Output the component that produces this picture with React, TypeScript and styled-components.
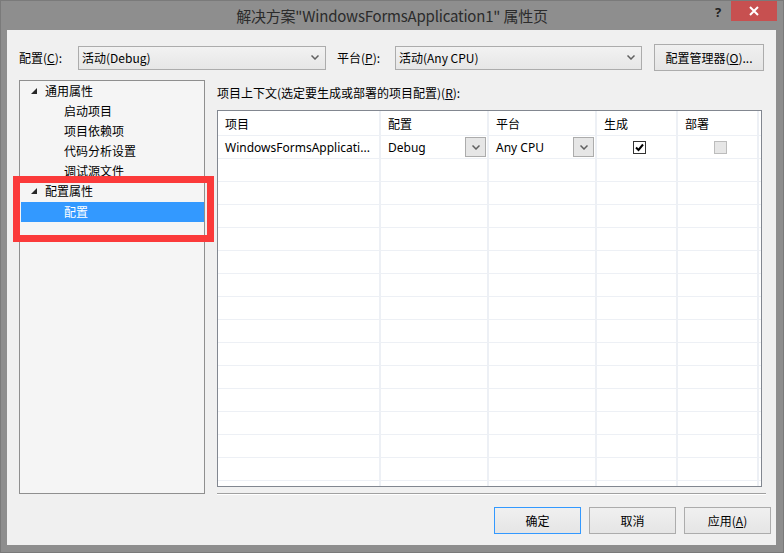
import styled, { createGlobalStyle } from 'styled-components'

const GlobalStyle = createGlobalStyle`
  html, body {
    margin: 0;
    padding: 0;
  }
  body {
    width: 784px;
    height: 553px;
    overflow: hidden;
    font-family: "Noto Sans", "Noto Sans CJK SC", sans-serif;
    font-size: 12px;
    color: #000;
  }
  * {
    box-sizing: border-box;
  }
`

const treeItems = [
  { id: 1, label: '通用属性', level: 0, expanded: true },
  { id: 2, label: '启动项目', level: 1 },
  { id: 3, label: '项目依赖项', level: 1 },
  { id: 4, label: '代码分析设置', level: 1 },
  { id: 5, label: '调试源文件', level: 1 },
  { id: 6, label: '配置属性', level: 0, expanded: true },
  { id: 7, label: '配置', level: 1, selected: true },
]

const columns = [
  { key: 'project', title: '项目', width: 163 },
  { key: 'config', title: '配置', width: 108 },
  { key: 'platform', title: '平台', width: 108 },
  { key: 'build', title: '生成', width: 81 },
  { key: 'deploy', title: '部署', width: 81 },
]

const emptyRows = Array.from({ length: 15 }, (_, i) => i)

function Chevron() {
  return (
    <svg width="8" height="5" viewBox="0 0 8 5">
      <polyline points="0.5,0.5 4,4 7.5,0.5" fill="none" stroke="#606060" strokeWidth="1.5" />
    </svg>
  )
}

function Expander() {
  return (
    <svg width="6" height="6" viewBox="0 0 6 6">
      <polygon points="6,0 6,6 0,6" fill="#262626" />
    </svg>
  )
}

export default function App() {
  const gridCols = columns.map((c) => `${c.width}px`).join(' ') + ' 1fr'

  return (
    <>
      <GlobalStyle />
      <Window>
        <TitleBar>
          <span />
          <Title>解决方案"WindowsFormsApplication1" 属性页</Title>
          <Controls>
            <HelpButton>?</HelpButton>
            <CloseButton>
              <svg width="10" height="10" viewBox="0 0 10 10">
                <path d="M1 1 L9 9 M9 1 L1 9" stroke="#fff" strokeWidth="2" />
              </svg>
            </CloseButton>
          </Controls>
        </TitleBar>

        <Client>
          <TopRow>
            <FieldLabel $width={59}>
              配置(<u>C</u>):
            </FieldLabel>
            <Combo $width={248}>
              <span>活动(Debug)</span>
              <Chevron />
            </Combo>
            <FieldLabel $width={58} $gap={11}>
              平台(<u>P</u>):
            </FieldLabel>
            <Combo $width={247}>
              <span>活动(Any CPU)</span>
              <Chevron />
            </Combo>
            <ManagerButton>
              配置管理器(<u>O</u>)...
            </ManagerButton>
          </TopRow>

          <Middle>
            <Tree>
              {treeItems.map((item) => (
                <TreeRow key={item.id} $level={item.level} $selected={!!item.selected}>
                  {item.expanded && (
                    <ExpanderBox>
                      <Expander />
                    </ExpanderBox>
                  )}
                  {item.label}
                </TreeRow>
              ))}
              <Highlight />
            </Tree>

            <RightPanel>
              <ContextLabel>
                项目上下文(选定要生成或部署的项目配置)(<u>R</u>):
              </ContextLabel>
              <Grid>
                <GridRow $cols={gridCols} $header>
                  {columns.map((c) => (
                    <HeaderCell key={c.key}>{c.title}</HeaderCell>
                  ))}
                  <FillCell />
                </GridRow>
                <GridRow $cols={gridCols}>
                  <Cell>
                    <span>WindowsFormsApplicati...</span>
                  </Cell>
                  <Cell>
                    <span>Debug</span>
                    <CellDrop>
                      <Chevron />
                    </CellDrop>
                  </Cell>
                  <Cell>
                    <span>Any CPU</span>
                    <CellDrop>
                      <Chevron />
                    </CellDrop>
                  </Cell>
                  <Cell $center>
                    <CheckBox>
                      <svg width="11" height="11" viewBox="0 0 11 11">
                        <path d="M2 5.5 L4.5 8 L9 2.5" fill="none" stroke="#000" strokeWidth="2" />
                      </svg>
                    </CheckBox>
                  </Cell>
                  <Cell $center>
                    <CheckBox $disabled />
                  </Cell>
                  <FillCell />
                </GridRow>
                {emptyRows.map((r) => (
                  <GridRow key={r} $cols={gridCols}>
                    {columns.map((c) => (
                      <Cell key={c.key} />
                    ))}
                    <FillCell />
                  </GridRow>
                ))}
              </Grid>
              <Separator />
            </RightPanel>
          </Middle>

          <ButtonRow>
            <DialogButton $default>确定</DialogButton>
            <DialogButton>取消</DialogButton>
            <DialogButton>
              应用(<u>A</u>)
            </DialogButton>
          </ButtonRow>
        </Client>
      </Window>
    </>
  )
}

const Window = styled.div`
  width: 784px;
  height: 553px;
  background: #8e8e8e;
  border: 1px solid #7a7a7a;
  display: flex;
  flex-direction: column;
`

const TitleBar = styled.div`
  height: 29px;
  display: grid;
  grid-template-columns: 1fr auto 1fr;
  align-items: start;
`

const Title = styled.div`
  font-family: "Noto Sans CJK SC", sans-serif;
  font-size: 15px;
  color: #2b2b2b;
  line-height: 30px;
  letter-spacing: -0.2px;
`

const Controls = styled.div`
  display: flex;
  justify-content: flex-end;
  align-items: flex-start;
  margin-right: 6px;
`

const HelpButton = styled.div`
  font-family: "Noto Sans", sans-serif;
  font-weight: bold;
  font-size: 13px;
  color: #222;
  width: 26px;
  text-align: center;
  line-height: 22px;
`

const CloseButton = styled.div`
  width: 46px;
  height: 20px;
  background: #c75050;
  display: flex;
  align-items: center;
  justify-content: center;
`

const Client = styled.div`
  flex: 1;
  margin: 0 7px 7px 6px;
  background: #f0f0f0;
  display: flex;
  flex-direction: column;
  padding: 14px 6px 11px 12px;
`

const TopRow = styled.div`
  display: flex;
  align-items: center;
  height: 27px;
  padding-right: 6px;
`

const FieldLabel = styled.div<{ $width: number; $gap?: number }>`
  width: ${({ $width }) => $width}px;
  margin-left: ${({ $gap }) => $gap ?? 0}px;
  font-family: "Noto Sans CJK SC", sans-serif;
  white-space: nowrap;
`

const Combo = styled.div<{ $width: number }>`
  width: ${({ $width }) => $width}px;
  height: 24px;
  border: 1px solid #acacac;
  background: linear-gradient(#f2f2f2, #e6e6e6);
  display: flex;
  align-items: center;
  justify-content: space-between;
  padding: 0 6px 0 3px;
  font-family: "Noto Sans CJK SC", sans-serif;
`

const ManagerButton = styled.div`
  margin-left: 12px;
  width: 110px;
  height: 27px;
  border: 1px solid #acacac;
  background: linear-gradient(#f0f0f0, #e5e5e5);
  display: flex;
  align-items: center;
  justify-content: center;
  font-family: "Noto Sans CJK SC", sans-serif;
`

const Middle = styled.div`
  margin-top: 9px;
  height: 415px;
  display: flex;
  padding-right: 4px;
`

const Tree = styled.div`
  position: relative;
  width: 186px;
  height: 414px;
  border: 1px solid #8f8f8f;
  background: #f5f5f5;
  font-family: "Noto Sans CJK SC", sans-serif;
`

const TreeRow = styled.div<{ $level: number; $selected: boolean }>`
  position: relative;
  height: 20px;
  line-height: 20px;
  margin: ${({ $selected }) => ($selected ? '1px 0 0 1px' : '0')};
  padding-left: ${({ $level, $selected }) => ($level === 0 ? 25 : $selected ? 43 : 44)}px;
  background: ${({ $selected }) => ($selected ? '#3399ff' : 'transparent')};
  color: ${({ $selected }) => ($selected ? '#fff' : '#000')};
`

const ExpanderBox = styled.span`
  position: absolute;
  left: 11px;
  top: 7px;
  display: flex;
`

const Highlight = styled.div`
  position: absolute;
  left: -7px;
  top: 95px;
  width: 201px;
  height: 66px;
  border: 7px solid #fb3a3a;
`

const RightPanel = styled.div`
  flex: 1;
  margin-left: 12px;
  display: flex;
  flex-direction: column;
`

const ContextLabel = styled.div`
  height: 30px;
  padding-top: 4px;
  font-family: "Noto Sans CJK SC", sans-serif;
`

const Grid = styled.div`
  width: 545px;
  height: 377px;
  border: 1px solid #828790;
  background: #fff;
  overflow: hidden;
`

const GridRow = styled.div<{ $cols: string; $header?: boolean }>`
  display: grid;
  grid-template-columns: ${({ $cols }) => $cols};
  height: ${({ $header }) => ($header ? 25 : 23)}px;
`

const HeaderCell = styled.div`
  border-right: 2px solid #edf0f5;
  border-bottom: 1px solid #edf0f5;
  padding-left: 7px;
  display: flex;
  align-items: center;
  font-family: "Noto Sans CJK SC", sans-serif;
`

const Cell = styled.div<{ $center?: boolean }>`
  border-right: 2px solid #edf0f5;
  border-bottom: 1px solid #edf0f5;
  padding: 0 1px 0 7px;
  display: flex;
  align-items: center;
  justify-content: ${({ $center }) => ($center ? 'center' : 'space-between')};
  white-space: nowrap;
  min-width: 0;
`

const FillCell = styled.div`
  border-bottom: 1px solid #edf0f5;
`

const CellDrop = styled.div`
  width: 21px;
  height: 20px;
  border: 1px solid #acacac;
  background: #e6e6e6;
  display: flex;
  align-items: center;
  justify-content: center;
  flex-shrink: 0;
`

const CheckBox = styled.div<{ $disabled?: boolean }>`
  width: 13px;
  height: 13px;
  border: 1px solid ${({ $disabled }) => ($disabled ? '#bcbcbc' : '#333')};
  background: ${({ $disabled }) => ($disabled ? '#e6e6e6' : '#fff')};
  display: flex;
  align-items: center;
  justify-content: center;
`

const Separator = styled.div`
  margin-top: 6px;
  height: 2px;
  border-top: 1px solid #a0a0a0;
  border-bottom: 1px solid #fff;
`

const ButtonRow = styled.div`
  margin-top: 12px;
  display: flex;
  justify-content: flex-end;
  gap: 8px;
  margin-right: -1px;
`

const DialogButton = styled.div<{ $default?: boolean }>`
  width: 87px;
  height: 27px;
  border: 1px solid ${({ $default }) => ($default ? '#3399ff' : '#acacac')};
  background: linear-gradient(#f0f0f0, #e5e5e5);
  display: flex;
  align-items: center;
  justify-content: center;
  font-family: "Noto Sans CJK SC", sans-serif;
`
